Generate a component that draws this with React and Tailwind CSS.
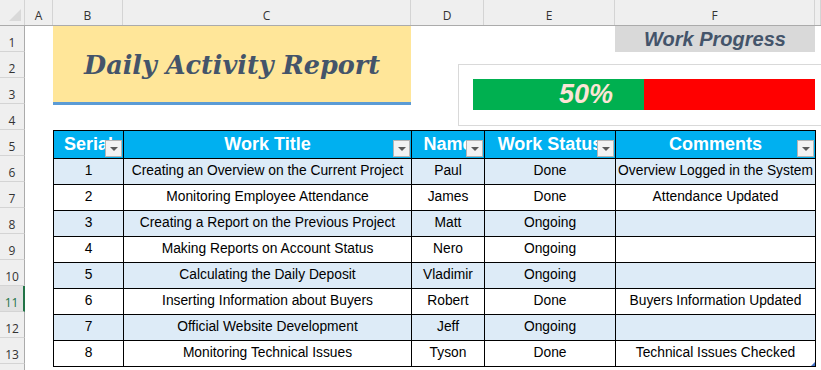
import React from "react";

const colHeads = [
  { label: "A", w: "w-[28px]" },
  { label: "B", w: "w-[70px]" },
  { label: "C", w: "w-[288px]" },
  { label: "D", w: "w-[73px]" },
  { label: "E", w: "w-[131px]" },
  { label: "F", w: "w-[200px]" },
  { label: "", w: "flex-1" },
];

const tasks = [
  [1, "Creating an Overview on the Current Project", "Paul", "Done", "Overview Logged in the System"],
  [2, "Monitoring Employee Attendance", "James", "Done", "Attendance Updated"],
  [3, "Creating a Report on the Previous Project", "Matt", "Ongoing", ""],
  [4, "Making Reports on Account Status", "Nero", "Ongoing", ""],
  [5, "Calculating the Daily Deposit", "Vladimir", "Ongoing", ""],
  [6, "Inserting Information about Buyers", "Robert", "Done", "Buyers Information Updated"],
  [7, "Official Website Development", "Jeff", "Ongoing", ""],
  [8, "Monitoring Technical Issues", "Tyson", "Done", "Technical Issues Checked"],
];

const headers = ["Serial", "Work Title", "Name", "Work Status", "Comments"];

function FilterButton() {
  return (
    <span className="absolute right-px bottom-px flex h-[17px] w-[17px] items-end justify-center border border-[#b4b4b4] bg-[#f2f2f2] pb-[5px]">
      <svg width="8" height="4" viewBox="0 0 8 4">
        <path d="M0 0h8L4 4z" fill="#595959" />
      </svg>
    </span>
  );
}

export default function App() {
  // row 14 is only partly on screen, its number falls below the fold
  const rows = Array.from({ length: 14 }, (_, i) => i + 1);

  return (
    <div className="relative h-[370px] w-[821px] overflow-hidden bg-white font-['Open_Sans',sans-serif]">
      {/* column letters */}
      <div className="flex h-[26px] border-b border-[#ababab] bg-[#efefef] text-[12px] text-[#333]">
        <div className="flex w-[25px] items-end justify-end border-r border-[#d4d4d4] pb-[3px] pr-[2px]">
          <svg width="14" height="14" viewBox="0 0 14 14">
            <path d="M1 13H13V1z" fill="#d9d9d9" />
          </svg>
        </div>
        {colHeads.map((c, i) => (
          <div
            key={i}
            className={`${c.w} flex items-center justify-center border-r border-[#d4d4d4] pt-[6px]`}
          >
            {c.label}
          </div>
        ))}
      </div>

      <div className="flex">
        {/* row numbers */}
        <div className="flex w-[25px] flex-col text-[12px]">
          {rows.map((r) =>
            r === 11 ? (
              <div
                key={r}
                className="flex h-[26px] items-center justify-center border-b border-r-2 border-b-[#d4d4d4] border-r-[#217346] bg-[#e1e1e1] pt-[8px] text-[#217346]"
              >
                {r}
              </div>
            ) : (
              <div
                key={r}
                className="flex h-[26px] items-center justify-center border-b border-r border-b-[#d4d4d4] border-r-[#ababab] bg-[#efefef] pt-[8px] text-[#333]"
              >
                {r < 14 ? r : ""}
              </div>
            )
          )}
        </div>

        {/* sheet */}
        <div className="relative grid flex-1 grid-cols-[28px_70px_288px_73px_131px_200px_6px] grid-rows-[repeat(14,26px)]">
          <div className="col-span-2 col-start-2 row-span-3 row-start-1 flex items-center justify-center border-b-2 border-[#5b9bd5] bg-[#ffe699] pt-[3px] shadow-[0_1px_0_#5b9bd5]">
            <span className="font-['DejaVu_Serif',serif] text-[25.5px] font-bold italic text-[#44546a]">
              Daily Activity Report
            </span>
          </div>

          <div className="col-start-6 row-start-1 flex items-center justify-center bg-[#d9d9d9]">
            <span className="font-['Liberation_Sans',sans-serif] text-[20px] font-bold italic text-[#44546a]">
              Work Progress
            </span>
          </div>

          <div className="col-span-5 col-start-2 row-span-9 row-start-5">
            <table className="w-full table-fixed border-collapse font-['Liberation_Sans',sans-serif]">
              <colgroup>
                <col className="w-[70px]" />
                <col className="w-[288px]" />
                <col className="w-[73px]" />
                <col className="w-[131px]" />
                <col className="w-[200px]" />
              </colgroup>
              <thead>
                <tr className="h-[26px]">
                  {headers.map((h) => (
                    <th
                      key={h}
                      className="relative overflow-hidden whitespace-nowrap border border-black bg-[#00b0f0] p-0 text-center text-[18px] font-bold text-white"
                    >
                      {h}
                      <FilterButton />
                    </th>
                  ))}
                </tr>
              </thead>
              <tbody>
                {tasks.map((t, i) => (
                  <tr
                    key={t[0]}
                    className={`h-[26px] ${i % 2 === 0 ? "bg-[#ddebf7]" : "bg-white"}`}
                  >
                    {t.map((v, j) => (
                      <td
                        key={j}
                        className="relative overflow-hidden whitespace-nowrap border border-black p-0 text-center text-[13.8px] text-black"
                      >
                        {v}
                        {i === tasks.length - 1 && j === 4 && (
                          <svg
                            className="absolute right-0 bottom-0"
                            width="4"
                            height="4"
                            viewBox="0 0 4 4"
                          >
                            <path d="M4 0V4H0z" fill="#4472c4" />
                          </svg>
                        )}
                      </td>
                    ))}
                  </tr>
                ))}
              </tbody>
            </table>
          </div>

          {/* progress chart object */}
          <div className="absolute top-[38px] left-[433px] h-[62px] w-[400px] border border-[#d9d9d9] bg-white pt-[14px] pl-[14px]">
            <div className="flex h-[31px] w-[342px]">
              <div className="flex w-[171px] items-center justify-end bg-[#00b050] pr-[31px]">
                <span className="font-['Liberation_Sans',sans-serif] text-[27px] font-bold italic text-[#fce4d6]">
                  50%
                </span>
              </div>
              <div className="flex-1 bg-[#ff0000]" />
            </div>
          </div>
        </div>
      </div>
    </div>
  );
}
